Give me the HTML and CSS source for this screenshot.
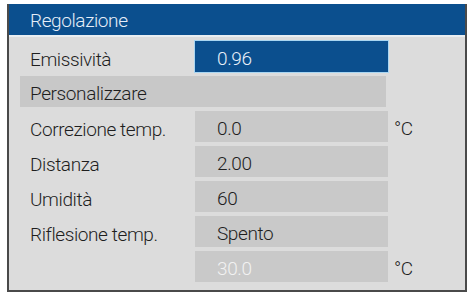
FILE: index.html
```html
<!DOCTYPE html>
<html>
<head>
<meta charset="utf-8">
<link rel="stylesheet" href="styles.css">
</head>
<body>
<div class="panel">
  <div class="header">Regolazione</div>
  <div class="rows">
    <div class="row">
      <div class="label">Emissività</div>
      <div class="value selected">0.96</div>
      <div class="unit"></div>
    </div>
    <div class="row">
      <div class="bar">Personalizzare</div>
    </div>
    <div class="row">
      <div class="label">Correzione temp.</div>
      <div class="value">0.0</div>
      <div class="unit">°C</div>
    </div>
    <div class="row">
      <div class="label">Distanza</div>
      <div class="value">2.00</div>
      <div class="unit"></div>
    </div>
    <div class="row">
      <div class="label">Umidità</div>
      <div class="value">60</div>
      <div class="unit"></div>
    </div>
    <div class="row">
      <div class="label">Riflesione temp.</div>
      <div class="value">Spento</div>
      <div class="unit"></div>
    </div>
    <div class="row">
      <div class="label"></div>
      <div class="value disabled">30.0</div>
      <div class="unit">°C</div>
    </div>
  </div>
</div>
</body>
</html>
```
FILE: styles.css
```css
html, body {
  margin: 0;
  padding: 0;
  background: #ffffff;
}
body {
  font-family: Roboto, "Liberation Sans", sans-serif;
  font-weight: 300;
  font-size: 19px;
  letter-spacing: -0.4px;
  color: #1e1e1e;
}
.panel {
  margin: 4px 0 0 7px;
  width: 456px;
  height: 286px;
  border: 2px solid #4a4a4a;
  border-top: 0;
  background: #dcdcdc;
  display: flex;
  flex-direction: column;
}
.header {
  background: #0b4f8e;
  color: #e6eef8;
  padding-left: 21px;
  display: flex;
  align-items: center;
  padding-top: 1px;
  box-sizing: border-box;
  border-bottom: 2px solid #e9eef2;
  height: 33px;
}
.rows {
  display: flex;
  flex-direction: column;
  gap: 4px;
  padding-top: 4px;
}
.row {
  height: 31px;
  display: flex;
  align-items: stretch;
}
.label {
  width: 186px;
  padding-left: 21px;
  display: flex;
  align-items: center;
  padding-top: 5px;
  box-sizing: border-box;
}
.value {
  width: 193px;
  background: #c9c9c9;
  padding-left: 22px;
  box-sizing: border-box;
  display: flex;
  align-items: center;
  padding-top: 4px;
}
.value.selected {
  background: #0b4f8e;
  color: #e8f0fa;
  box-shadow: 0 0 0 1px #a9d6f2;
}
.value.disabled {
  color: #f2f2f2;
}
.unit {
  padding-left: 6px;
  display: flex;
  align-items: center;
  padding-top: 4px;
}
.bar {
  margin-left: 11px;
  width: 366px;
  background: #c8c8c8;
  padding-left: 10px;
  box-sizing: border-box;
  display: flex;
  align-items: center;
  padding-top: 3px;
}
```
